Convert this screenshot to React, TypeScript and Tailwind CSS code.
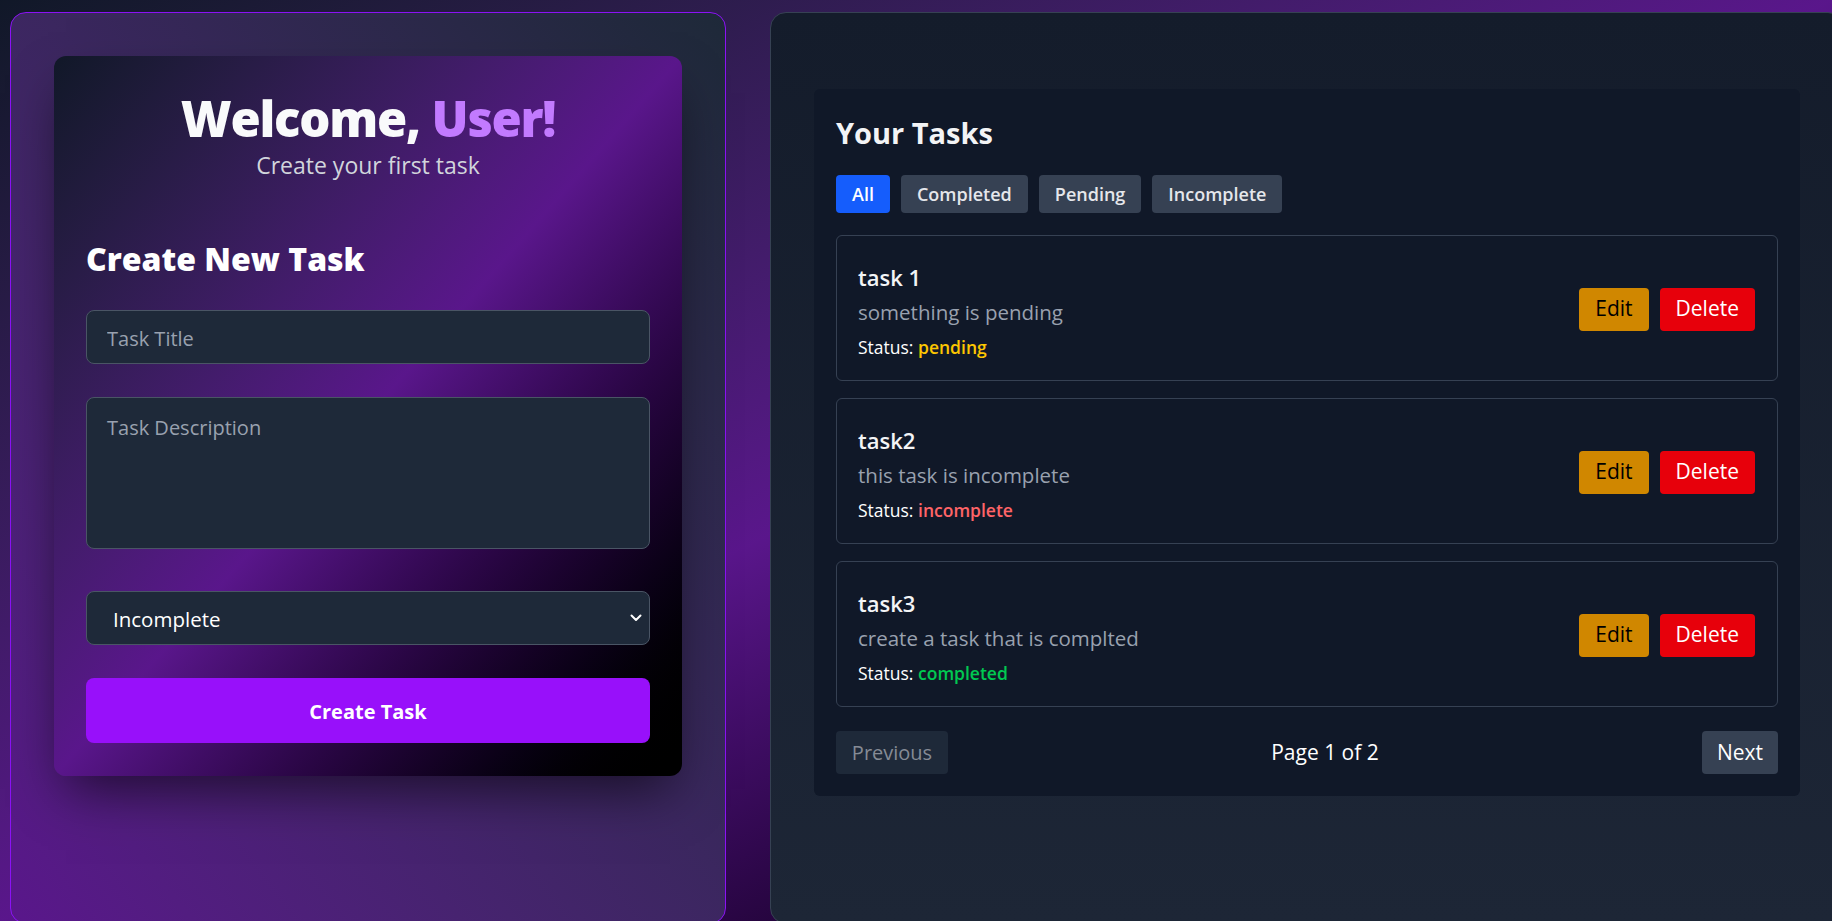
import React from "react";

const tasks = [
  { title: "task 1", desc: "something is pending", status: "pending", color: "text-yellow-400" },
  { title: "task2", desc: "this task is incomplete", status: "incomplete", color: "text-red-400" },
  { title: "task3", desc: "create a task that is complted", status: "completed", color: "text-green-500" },
];

export default function App() {
  return (
    <div className="w-[1832px] h-[921px] overflow-hidden bg-gradient-to-br from-gray-900 via-purple-900 to-black font-['Open_Sans','Noto_Sans',sans-serif]">
      <div className="flex gap-[44px] pl-[10px] pt-[12px]">
        {/* Left panel */}
        <div className="w-[716px] h-[912px] shrink-0 rounded-2xl border border-[#8b12f5] bg-gradient-to-tr from-purple-900 to-gray-800 px-[43px] pt-[43px]">
          <div className="rounded-xl bg-gradient-to-br from-gray-900 via-purple-900 to-black px-8 pt-8 pb-[33px] shadow-2xl shadow-black/60">
            <h1 className="text-center text-[49px] leading-[60px] font-extrabold text-gray-50 tracking-tight">
              Welcome, <span className="text-purple-400">User!</span>
            </h1>
            <p className="mt-[3px] text-center text-[23px] leading-[28px] text-gray-300">Create your first task</p>
            <h2 className="mt-[62px] text-[32px] leading-[36px] font-extrabold text-white">Create New Task</h2>
            <div className="mt-[33px] flex flex-col">
              <input
                placeholder="Task Title"
                className="h-[54px] w-full rounded-lg border border-gray-600 bg-gray-800 px-5 pt-[2px] text-[20px] text-white placeholder-gray-400 outline-none"
              />
              <textarea
                placeholder="Task Description"
                className="mt-[33px] block h-[152px] w-full resize-none rounded-lg border border-gray-600 bg-gray-800 px-5 pt-[15px] pb-3 text-[20px] text-white placeholder-gray-400 outline-none"
              />
              <div className="relative mt-[42px]">
                <select className="h-[54px] w-full appearance-none rounded-lg border border-gray-600 bg-gray-800 pl-[26px] pr-6 pt-[2px] text-[20.5px] text-white outline-none">
                  <option>Incomplete</option>
                  <option>Pending</option>
                  <option>Completed</option>
                </select>
                <svg className="pointer-events-none absolute right-[8px] top-1/2 -translate-y-1/2" width="12" height="8" viewBox="0 0 12 8" fill="none">
                  <path d="M1.5 1.5L6 6L10.5 1.5" stroke="white" strokeWidth="2" strokeLinecap="round" strokeLinejoin="round" />
                </svg>
              </div>
              <button className="mt-[33px] h-[65px] w-full rounded-lg bg-purple-600 pt-[2px] text-[20px] font-bold text-white">
                Create Task
              </button>
            </div>
          </div>
        </div>

        {/* Right panel */}
        <div className="w-[1074px] h-[912px] shrink-0 rounded-2xl border border-gray-700 bg-gradient-to-b from-[#141c2b] to-[#1d2636] px-[43px] pt-[76px]">
          <div className="rounded-md bg-gray-900 px-[22px] pt-[26px] pb-[22px]">
            <h2 className="text-[29px] leading-[36px] font-bold text-gray-100">Your Tasks</h2>
            <div className="mt-[24px] flex gap-[11px]">
              <button className="h-[38px] rounded bg-blue-600 px-4 text-[18px] font-semibold text-white">All</button>
              <button className="h-[38px] rounded bg-gray-700 px-4 text-[18px] font-semibold text-gray-200">Completed</button>
              <button className="h-[38px] rounded bg-gray-700 px-4 text-[18px] font-semibold text-gray-200">Pending</button>
              <button className="h-[38px] rounded bg-gray-700 px-4 text-[18px] font-semibold text-gray-200">Incomplete</button>
            </div>
            <div className="mt-[22px] flex flex-col gap-[17px]">
              {tasks.map((t) => (
                <div key={t.title} className="flex h-[146px] items-center justify-between rounded-md border border-gray-700 pl-[21px] pr-[22px] pt-[6px]">
                  <div className="flex flex-col">
                    <div className="text-[22px] leading-[28px] font-semibold text-gray-100">{t.title}</div>
                    <div className="mt-[7px] text-[20.5px] leading-[28px] text-gray-400">{t.desc}</div>
                    <div className="mt-[9px] text-[17.5px] leading-[24px] text-white">
                      Status: <span className={`font-semibold ${t.color}`}>{t.status}</span>
                    </div>
                  </div>
                  <div className="-mt-[4px] flex gap-[11px]">
                    <button className="h-[43px] rounded bg-yellow-600 px-4 text-[21px] text-black">Edit</button>
                    <button className="h-[43px] rounded bg-red-600 px-4 text-[21px] font-medium text-white">Delete</button>
                  </div>
                </div>
              ))}
            </div>
            <div className="mt-[24px] flex items-center justify-between">
              <button className="h-[43px] w-[112px] rounded bg-gray-800 text-[20px] text-[#858b95]">Previous</button>
              <span className="text-[21px] text-white">Page 1 of 2</span>
              <button className="h-[43px] w-[76px] rounded bg-gray-700 text-[21px] text-white">Next</button>
            </div>
          </div>
        </div>
      </div>
    </div>
  );
}
